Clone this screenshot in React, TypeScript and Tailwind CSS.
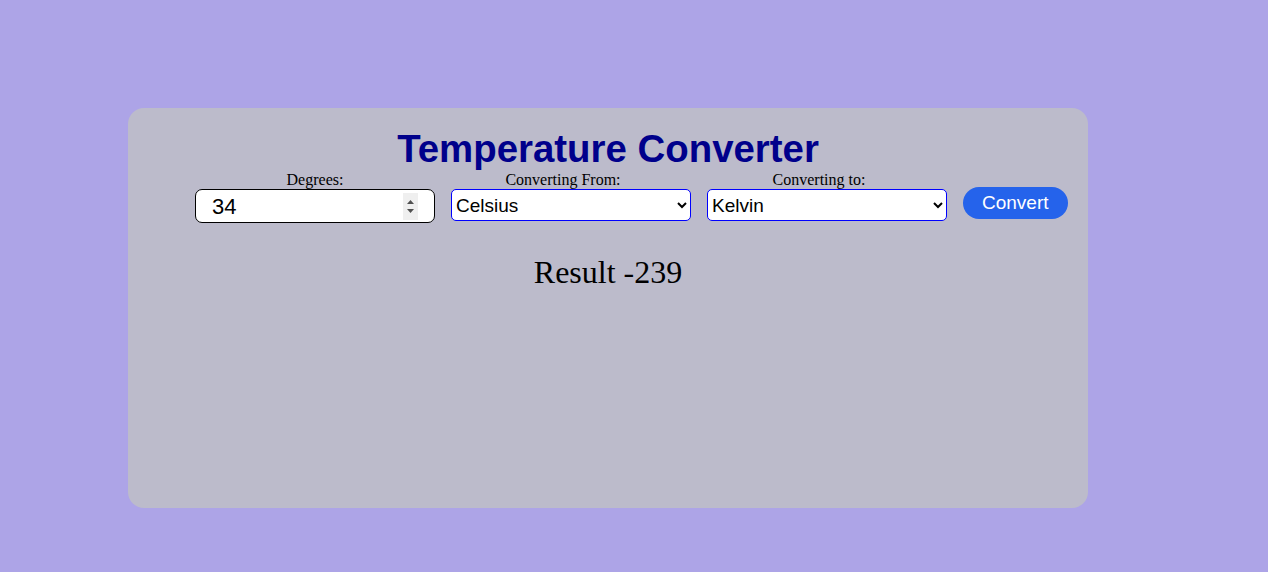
import { useState } from "react";

export default function App() {
  const [degrees, setDegrees] = useState("34");
  const [from, setFrom] = useState("Celsius");
  const [to, setTo] = useState("Kelvin");

  return (
    <div className="min-h-[572px] w-full bg-[#ada4e7] pt-[108px] pl-[128px]">
      <div className="w-[960px] h-[400px] rounded-2xl bg-[#bcbbcb] pt-[19px] font-['Liberation_Serif',serif]">
        <h1 className="text-center text-[38.4px] font-bold leading-[44px] text-[#00008b] font-['Liberation_Sans',Arial,sans-serif]">
          Temperature Converter
        </h1>

        <div className="flex items-start gap-4 pl-[67px]">
          <div className="flex w-[240px] flex-col items-center">
            <label className="text-[16px] leading-[18px] text-black">Degrees:</label>
            {/* number field with drawn spin buttons */}
            <div className="flex h-[34px] w-[240px] items-center rounded-[7px] border border-black bg-white pl-4 pr-4">
              <input
                value={degrees}
                onChange={(e) => setDegrees(e.target.value)}
                className="min-w-0 flex-1 bg-transparent text-[22px] text-black outline-none font-['Liberation_Sans',Arial,sans-serif]"
              />
              <div className="flex h-[27px] w-[15px] flex-col items-center justify-center gap-[5px] bg-[#efefef]">
                <svg width="7" height="4" viewBox="0 0 7 4">
                  <path d="M0 4 L3.5 0 L7 4 Z" fill="#505050" />
                </svg>
                <svg width="7" height="4" viewBox="0 0 7 4">
                  <path d="M0 0 L3.5 4 L7 0 Z" fill="#505050" />
                </svg>
              </div>
            </div>
          </div>

          <div className="flex w-[240px] flex-col items-center">
            <label className="mr-4 text-[16px] leading-[18px] text-black">Converting From:</label>
            <select
              value={from}
              onChange={(e) => setFrom(e.target.value)}
              className="h-[32px] w-[240px] rounded-[5px] border border-[#0000ff] bg-white text-[19px] text-black font-['Liberation_Sans',Arial,sans-serif]"
            >
              <option>Celsius</option>
              <option>Fahrenheit</option>
              <option>Kelvin</option>
            </select>
          </div>

          <div className="flex w-[240px] flex-col items-center">
            <label className="mr-4 text-[16px] leading-[18px] text-black">Converting to:</label>
            <select
              value={to}
              onChange={(e) => setTo(e.target.value)}
              className="h-[32px] w-[240px] rounded-[5px] border border-[#0000ff] bg-white text-[19px] text-black font-['Liberation_Sans',Arial,sans-serif]"
            >
              <option>Celsius</option>
              <option>Fahrenheit</option>
              <option>Kelvin</option>
            </select>
          </div>

          <button className="mt-4 h-[32px] rounded-full bg-[#2563eb] px-[19px] text-[19px] text-white font-['Liberation_Sans',Arial,sans-serif]">
            Convert
          </button>
        </div>

        <p className="mt-[31px] text-center text-[32px] leading-[37px] text-black">Result -239</p>
      </div>
    </div>
  );
}
